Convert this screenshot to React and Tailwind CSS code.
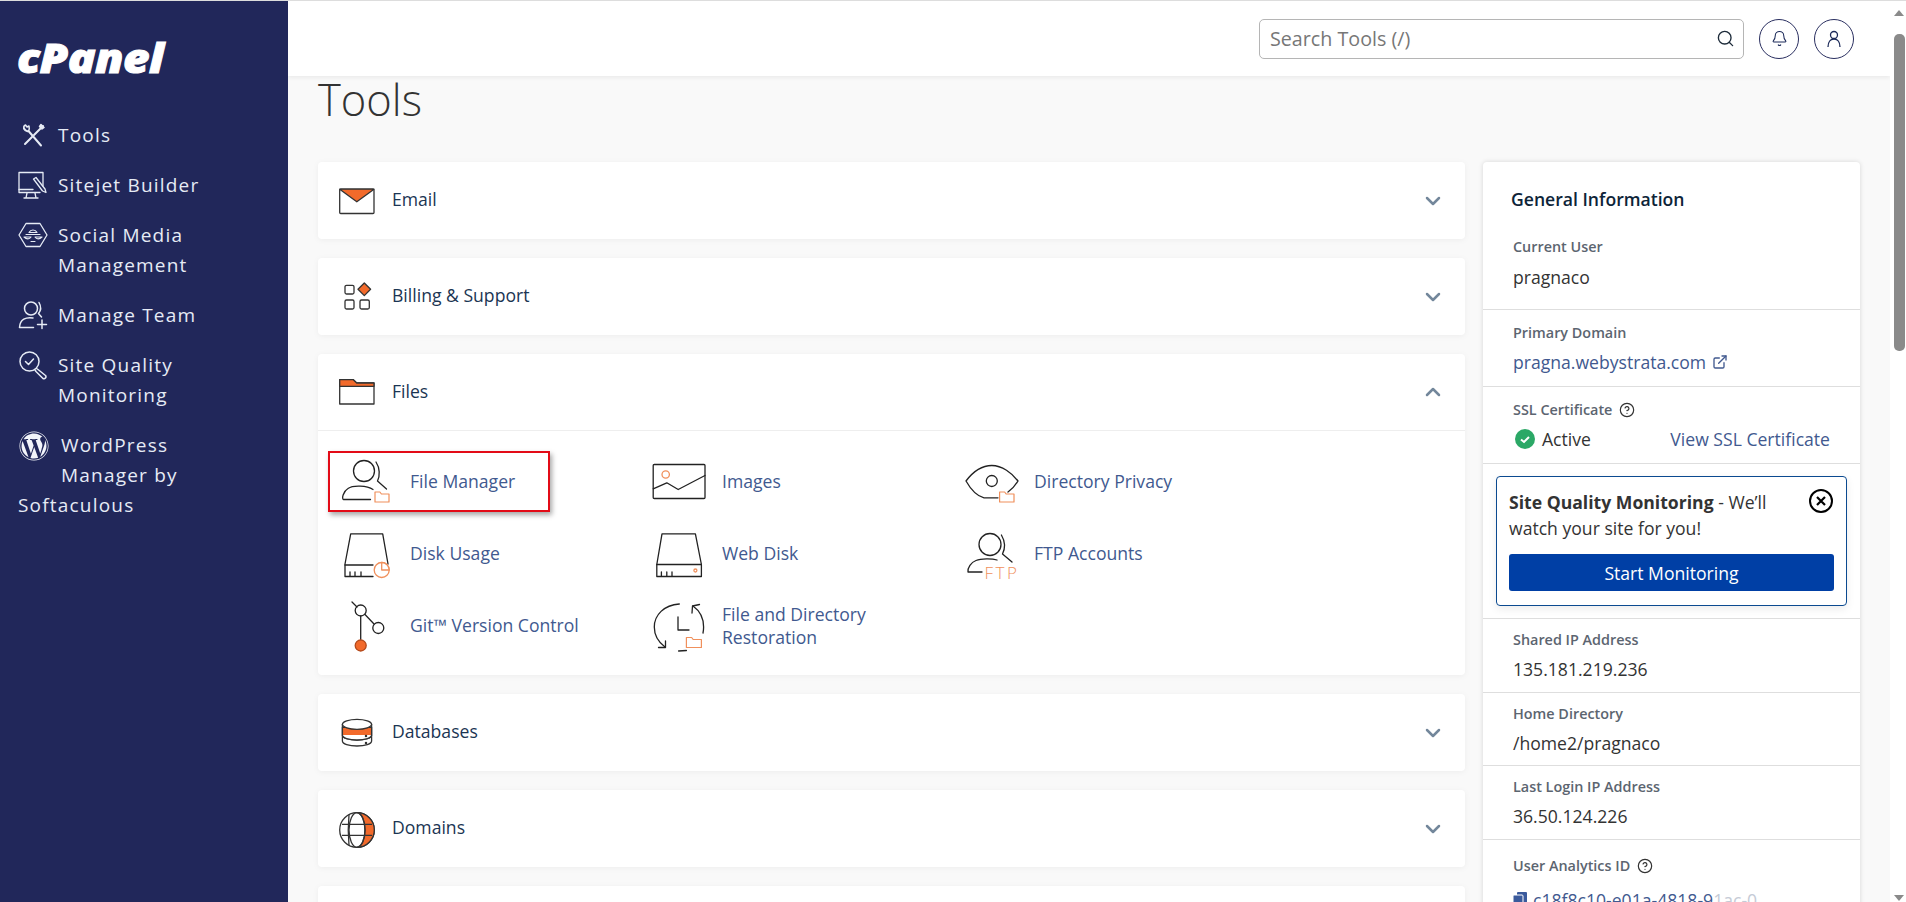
import React from "react";
import { ChevronDown, ChevronUp, Search, Bell, ExternalLink, CircleHelp } from "lucide-react";
import { FaWordpress } from "react-icons/fa";

const INK = "#222";
const OR = "#f26a2b";
const LT = "#f0905c";

const Folder = ({ x, y, w, h }) => (
  <path
    d={`M${x} ${y + 1}h${w * 0.35}l1.5 2h${w * 0.65 - 1.5}v${h - 3}h-${w}z`}
    fill="#fff"
    stroke={LT}
    strokeWidth="1.2"
    strokeLinejoin="round"
  />
);

const Line = ({ children, vb = "0 0 64 57" }) => (
  <svg viewBox={vb} className="w-[64px] h-[57px] shrink-0 overflow-visible" fill="none" stroke={INK} strokeWidth="1.3" strokeLinecap="round" strokeLinejoin="round">
    {children}
  </svg>
);

const FileManagerIcon = () => (
  <Line>
    <circle cx="32" cy="18" r="10.5" />
    <path d="M44 9c4 6 4 14 1.5 19l9 8" />
    <path d="M41 36.5c-6-4-20-4.500-25-1-5 3-6.500 10.500-4.500 11h27" />
    <Folder x={43} y={38} w={14} h={11} />
  </Line>
);
const DiskUsageIcon = () => (
  <Line>
    <path d="M41 51.500H13V39l5.700-30.200h32L56 39" />
    <path d="M13 40h28M18 47v4M23 47v4M29 47v4" />
    <circle cx="49.700" cy="45" r="7.500" stroke={LT} fill="#fff" />
    <path d="M49.700 45v-7.500a7.500 7.500 0 0 1 7.500 7.500z" stroke={LT} fill="#fff" />
  </Line>
);
const GitIcon = () => (
  <Line>
    <path d="M20 5l5 5M28.700 19v23.500M33 17.500l9 9.500" />
    <circle cx="28.700" cy="13.500" r="5.500" />
    <circle cx="46.300" cy="31" r="5.500" />
    <circle cx="28.700" cy="48.500" r="5.500" fill={OR} stroke="#b34a1c" />
  </Line>
);
const ImagesIcon = () => (
  <Line>
    <rect x="9.200" y="11.500" width="51.800" height="34" rx="1" />
    <path d="M9.200 35.800l13.600-6 11.400 6.700L61 22.500" />
    <circle cx="21.700" cy="21.500" r="3.700" stroke={LT} />
  </Line>
);
const WebDiskIcon = () => (
  <Line>
    <path d="M12.800 39.500L18 8.800h33.400l6 30.700v12H12.800z" />
    <path d="M12.800 39.500h44.600M17.400 47v4M22.800 47v4M28 47v4" />
    <circle cx="51.400" cy="45.500" r="1.500" stroke={LT} />
  </Line>
);
const RestoreIcon = () => (
  <Line>
    <path d="M35.300 7C20 8 10.300 18 10.300 30c0 8 4 15 10.700 20" />
    <path d="M14.500 50.500H21.500V44" />
    <path d="M49 9c7 5 10.600 13 10.600 21 0 2-.2 4-.6 6" />
    <path d="M48 16l.500-7 7-1.500" />
    <path d="M34 20v13h11M34.600 54l7.800-.5" />
    <Folder x={42.400} y={39.500} w={15} h={11} />
  </Line>
);
const EyeIcon = () => (
  <Line>
    <path d="M42 44.800H28C20 43 14 35 10 28c6-8 15-15.500 25.800-15.500C46 12.500 56 20 62 28c-2.500 4-6 8-10 11" />
    <circle cx="35.800" cy="28" r="5.500" />
    <Folder x={43.600} y={38} w={14.400} h={11} />
  </Line>
);
const FtpIcon = () => (
  <Line>
    <circle cx="34" cy="19.500" r="11" />
    <path d="M45.400 10c3.500 6 4 13 1.100 19l9.500 8" />
    <path d="M41 35c-5-1.500-16-1.500-21 .5-5 2-8.500 7-8 11.500h14" />
    <text x="28.500" y="54" fontSize="17" letterSpacing="2.500" fill={LT} stroke="none" fontFamily="'Open Sans', sans-serif" fontWeight="300">FTP</text>
  </Line>
);

const Head = ({ children }) => (
  <svg viewBox="0 0 44 40" className="w-[44px] h-[40px] shrink-0" fill="#fff" stroke="#333" strokeWidth="1.300" strokeLinejoin="round">
    {children}
  </svg>
);
const EmailIcon = () => (
  <Head>
    <rect x="4.700" y="8.200" width="34.300" height="24.300" rx="1" />
    <path d="M4.700 8.200H39L21.800 20.800z" fill={OR} />
  </Head>
);
const BillingIcon = () => (
  <Head>
    <rect x="10" y="8.300" width="9" height="8.700" rx="1.500" />
    <rect x="10" y="23" width="9" height="9" rx="1.500" />
    <rect x="25" y="23" width="9.300" height="9" rx="1.500" />
    <path d="M29.300 6l6.300 6.300-6.300 6.300-6.300-6.300z" fill={OR} />
  </Head>
);
const FilesIcon = () => (
  <Head>
    <path d="M4.700 32V7.700H18.300l3.400 3.300H39v21z" />
    <path d="M4.700 14.300V7.700H18.300l3.400 3.300H39v3.300z" fill={OR} />
  </Head>
);
const DatabasesIcon = () => (
  <Head>
    <path d="M7.400 11.300v16.700c0 3 6.500 5 14.600 5s14.600-2 14.600-5V11.300z" />
    <path d="M7.400 14.300v7.700c0 3 6.500 5 14.600 5s14.600-2 14.600-5v-7.700z" fill={OR} />
    <path d="M7.400 22c0 3 6.500 5 14.600 5s14.600-2 14.600-5" />
    <ellipse cx="22" cy="11.300" rx="14.600" ry="5" />
    <circle cx="31" cy="23" r=".6" fill="#333" />
    <circle cx="31" cy="30" r=".6" fill="#333" />
  </Head>
);
const DomainsIcon = () => (
  <Head>
    <circle cx="22" cy="21" r="17.300" />
    <path d="M22 3.700c5 1 8 8.500 8 17.300s-3 16.300-8 17.300c9.500 0 17.300-7.800 17.300-17.300S31.500 3.700 22 3.700z" fill={OR} />
    <ellipse cx="22" cy="21" rx="8" ry="17.300" fill="none" />
    <path d="M7 15.300h30M7 26.300h30M14 5.600c-1 10-1 20 0 30.800" fill="none" />
  </Head>
);

const Nav = ({ children }) => (
  <svg viewBox="0 0 30 30" className="w-[30px] h-[30px] shrink-0" fill="none" stroke="#e6ebf5" strokeWidth="1.500" strokeLinecap="round" strokeLinejoin="round">
    {children}
  </svg>
);

const navItems = [
  {
    label: ["Tools"],
    icon: (
      <Nav>
        <path d="M25 6l-9 9M14 17l-7 7" strokeWidth="2" />
        <path d="M23 4.500l3 3-2 1.500-2.500-2.500z" fill="#e6ebf5" />
        <path d="M6 8.500c1 2 3 3 4.500 2.500L23 25.500" strokeWidth="2" />
        <path d="M6 8.500c-.5-1.500 0-3 1.500-3.500l1.500 2 2-1c.5 2 .5 3.500-.5 5" />
      </Nav>
    ),
  },
  {
    label: ["Sitejet Builder"],
    icon: (
      <Nav>
        <path d="M25 16V2.500H1v20h21" strokeWidth="1.300" />
        <path d="M1 19.500h14M9 23l-1 5M17 23l1 5M6 28h14" strokeWidth="1.300" />
        <path d="M15.500 9l2.500-1.500 9 11.500 1 3.500-3.500-1.500z" strokeWidth="1.300" />
      </Nav>
    ),
  },
  {
    label: ["Social Media", "Management"],
    icon: (
      <Nav>
        <path d="M8 3.500h14L29 15l-7 11.500H8L1 15z" strokeWidth="1.300" />
        <path d="M11 12.500a4.500 4.500 0 0 1 8 0zM8 14.500h14M6 17c2.500 2.500 5.500 2.500 7 0H6zM17 17c1.500 2.500 4.500 2.500 7 0h-7zM13 21.500h4" strokeWidth="1.100" />
      </Nav>
    ),
  },
  {
    label: ["Manage Team"],
    icon: (
      <Nav>
        <circle cx="13" cy="8.500" r="6.500" />
        <path d="M21 2.500c2 3.500 2 8-.5 11l3 3.500" />
        <path d="M15 18c-7-1-13 1-13.500 9.500h14" />
        <path d="M24 20v8.500M19.500 24.500h9" />
      </Nav>
    ),
  },
  {
    label: ["Site Quality", "Monitoring"],
    icon: (
      <Nav>
        <circle cx="11.500" cy="11.500" r="9.500" />
        <path d="M7.500 11.500l3 3 5-5.500" />
        <path d="M18.500 18.500l1.500 1 7.500 6a2 2 0 0 1-2.500 3l-7-7-1-1.500" />
      </Nav>
    ),
  },
];

const Sidebar = () => (
  <aside className="w-[288px] shrink-0 bg-[#21275a] text-[#e6ebf5] text-[19px] leading-[30px] tracking-[1.2px]">
    <div className="h-[109px] pl-[17px] pt-[31px]">
      <span className="block origin-left scale-x-[1.12] text-[41px] leading-[50px] font-extrabold italic text-white tracking-[-0.5px] [-webkit-text-stroke:1px_white]">cPanel</span>
    </div>
    {navItems.map((item) => (
      <div key={item.label[0]} className="flex gap-[10px] pl-[18px] py-[10px]">
        {item.icon}
        <div>
          {item.label.map((t) => (
            <div key={t}>{t}</div>
          ))}
        </div>
      </div>
    ))}
    <div className="w-[200px] pl-[18px] pt-[10px]">
      <FaWordpress className="float-left w-[30px] h-[30px] ml-px mt-px mr-[12px] mb-[28px] text-[#f2f4fa]" />
      WordPress Manager by Softaculous
    </div>
  </aside>
);

const Header = () => (
  <header className="h-[75px] shrink-0 bg-white shadow-[0_2px_4px_rgba(0,0,0,0.06)] relative z-10 flex items-center justify-end pr-[36px]">
    <div className="w-[485px] h-[40px] border border-[#b5b5b5] rounded-[5px] flex items-center justify-between pl-[10px] pr-[8px] mr-[15px]">
      <span className="text-[19.7px] text-[#777]">Search Tools (/)</span>
      <Search size={19} color="#1d2b3a" strokeWidth={1.7} />
    </div>
    <button className="w-[40px] h-[40px] rounded-full border border-[#2a2f60] flex items-center justify-center mr-[15px]">
      <Bell size={17} color="#1d2b5a" strokeWidth={1.5} />
    </button>
    <button className="w-[40px] h-[40px] rounded-full border border-[#2a2f60] flex items-center justify-center">
      <svg viewBox="0 0 18 18" className="w-[18px] h-[18px]" fill="none" stroke="#1d2b5a" strokeWidth="1.300">
        <circle cx="9" cy="5" r="3.500" />
        <path d="M3 17c0-5 2.500-8 6-8s6 3 6 8" />
      </svg>
    </button>
  </header>
);

const Card = ({ icon, title, open, children }) => (
  <section className="bg-white rounded-[4px] shadow-[0_1px_6px_rgba(0,0,0,0.05)]">
    <div className={`h-[77px] flex items-center pl-[17px] pr-[20px] ${open ? "border-b border-[#eeeeee]" : ""}`}>
      {icon}
      <h2 className="ml-[13px] mb-[2px] text-[17.6px] text-[#1b3553]">{title}</h2>
      <span className="ml-auto">
        {open ? <ChevronUp size={24} color="#73879b" strokeWidth={2.5} /> : <ChevronDown size={24} color="#73879b" strokeWidth={2.5} />}
      </span>
    </div>
    {children}
  </section>
);

const fileItems = [
  { icon: <FileManagerIcon />, label: "File Manager", marked: true },
  { icon: <ImagesIcon />, label: "Images" },
  { icon: <EyeIcon />, label: "Directory Privacy" },
  { icon: <DiskUsageIcon />, label: "Disk Usage" },
  { icon: <WebDiskIcon />, label: "Web Disk" },
  { icon: <FtpIcon />, label: "FTP Accounts" },
  { icon: <GitIcon />, label: "Git™ Version Control" },
  { icon: <RestoreIcon />, label: "File and Directory Restoration" },
];

const ToolItem = ({ icon, label, marked }) => (
  <a className={`h-[61px] flex items-center gap-[14px] pl-[2px] border-2 text-[17.6px] leading-[23px] text-[#41598f] ${marked ? "w-[222px] border-[#e30b17] shadow-[2px_3px_5px_rgba(0,0,0,0.35)]" : "w-[300px] border-transparent"}`}>
    {icon}
    <span>{label}</span>
  </a>
);

const Row = ({ label, help, children, className }) => (
  <div className={`border-t border-[#dedede] px-[30px] pt-[3px] flex flex-col justify-center gap-[4px] ${className}`}>
    <div className="text-[14.4px] leading-[20px] font-semibold text-[#5c6570] flex items-center gap-[7px]">
      {label}
      {help && <CircleHelp size={16} color="#333" strokeWidth={1.8} />}
    </div>
    <div className="text-[17.6px] leading-[30px] text-[#333] whitespace-nowrap">{children}</div>
  </div>
);

const InfoPanel = () => (
  <aside className="bg-white rounded-[4px] shadow-[0_0_5px_rgba(0,0,0,0.14)]">
    <div className="h-[147px] px-[28px] pt-[24px]">
      <h3 className="text-[17.6px] leading-[26px] font-semibold text-[#0d2438]">General Information</h3>
      <div className="mt-[25px] ml-[2px] text-[14.4px] leading-[20px] font-semibold text-[#5c6570]">Current User</div>
      <div className="mt-[5px] ml-[2px] text-[17.6px] leading-[30px] text-[#333]">pragnaco</div>
    </div>
    <Row label="Primary Domain" className="h-[77px]">
      <span className="text-[#41598f] flex items-center gap-[6px]">
        pragna.webystrata.com <ExternalLink size={16} color="#41598f" strokeWidth={2} />
      </span>
    </Row>
    <Row label="SSL Certificate" help className="h-[77px]">
      <div className="flex items-center justify-between">
        <span className="flex items-center gap-[7px] pl-[2px]">
          <svg viewBox="0 0 20 20" className="w-[20px] h-[20px]">
            <circle cx="10" cy="10" r="10" fill="#2ba866" />
            <path d="M6 10.500l3 2.500 5-5" fill="none" stroke="#fff" strokeWidth="2" />
          </svg>
          Active
        </span>
        <span className="text-[#41598f]">View SSL Certificate</span>
      </div>
    </Row>
    <div className="border-t border-[#dedede] h-[155px] px-[13px] pt-[12px]">
      <div className="relative h-[130px] border border-[#0b4a90] rounded-[4px] shadow-[0_3px_8px_rgba(0,0,0,0.08)] px-[12px] pt-[12px] text-[17.6px] leading-[26px] text-[#333]">
        <p className="pr-[28px]">
          <b className="font-bold">Site Quality Monitoring</b> - We’ll watch your site for you!
        </p>
        <span className="absolute top-[12px] right-[13px] w-[24px] h-[24px] rounded-full border-[2.5px] border-black flex items-center justify-center">
          <svg viewBox="0 0 10 10" className="w-[10px] h-[10px]" stroke="#000" strokeWidth="2.2">
            <path d="M1 1l8 8M9 1l-8 8" />
          </svg>
        </span>
        <button className="mt-[13px] w-full h-[37px] rounded-[3px] bg-[#003fa5] text-white text-[17.6px]">Start Monitoring</button>
      </div>
    </div>
    <Row label="Shared IP Address" className="h-[74px]">135.181.219.236</Row>
    <Row label="Home Directory" className="h-[73px]">/home2/pragnaco</Row>
    <Row label="Last Login IP Address" className="h-[74px]">36.50.124.226</Row>
    <Row label="User Analytics ID" help className="h-[110px] !justify-start !pt-[16px] !gap-[9px]">
      <span className="flex items-center gap-[6px] text-[#41598f]">
        <svg viewBox="0 0 14 16" className="w-[14px] h-[16px]" fill="#3a5a9c">
          <rect x="4" y="0" width="10" height="12" rx="1" />
          <rect x="0" y="3" width="10" height="13" rx="1" stroke="#fff" />
        </svg>
        <span>
          c18f8c10-e01a-4818-9<span className="text-[#c5cbd6]">1ac-0</span>
        </span>
      </span>
    </Row>
  </aside>
);

const Scrollbar = () => (
  <div className="w-[16px] shrink-0 bg-white flex flex-col items-center pl-[2px]">
    <span className="mt-[9px] w-0 h-0 border-x-[5px] border-x-transparent border-b-[6px] border-b-[#8a8a8a]" />
    <div className="mt-[18px] w-[11px] h-[317px] rounded-[5px] bg-[#8a8a8a]" />
    <span className="mt-auto mb-[1px] w-0 h-0 border-x-[5px] border-x-transparent border-t-[6px] border-t-[#8a8a8a]" />
  </div>
);

export default function App() {
  return (
    <div className="h-[902px] overflow-hidden border-t border-[#dddddd] flex font-['Open_Sans',sans-serif]">
      <Sidebar />
      <main className="flex-1 min-w-0 bg-[#f9f9f9] flex flex-col overflow-hidden">
        <Header />
        <div className="px-[30px] pr-[29px]">
          <h1 className="h-[86px] text-[43.5px] leading-[48px] font-light text-[#333]">Tools</h1>
          <div className="grid grid-cols-[1147px_377px] gap-[18px] items-start">
            <div className="flex flex-col gap-[19px]">
              <Card icon={<EmailIcon />} title="Email" />
              <Card icon={<BillingIcon />} title="Billing & Support" />
              <Card icon={<FilesIcon />} title="Files" open>
                <div className="grid grid-cols-[312px_312px_312px] gap-y-[11px] pl-[10px] pt-[20px] pb-[19px]">
                  {fileItems.map((item) => (
                    <ToolItem key={item.label} {...item} />
                  ))}
                </div>
              </Card>
              <Card icon={<DatabasesIcon />} title="Databases" />
              <Card icon={<DomainsIcon />} title="Domains" />
              <Card icon={null} title="" />
            </div>
            <InfoPanel />
          </div>
        </div>
      </main>
      <Scrollbar />
    </div>
  );
}
